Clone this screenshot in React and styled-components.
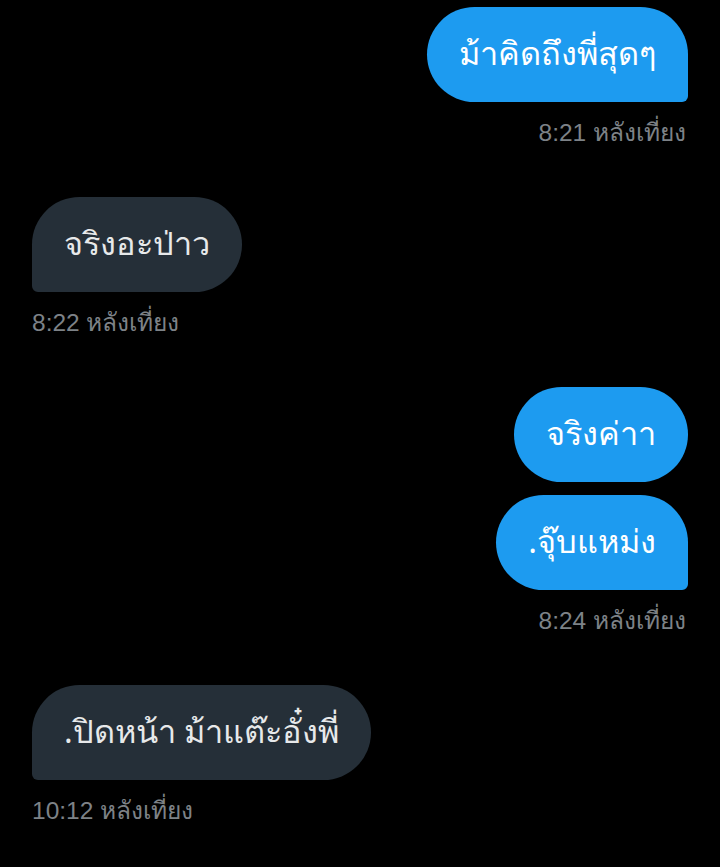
import React from "react";
import styled, { createGlobalStyle, css } from "styled-components";

const Global = createGlobalStyle`
  html, body { margin: 0; padding: 0; background: #000; }
  body { font-family: "Noto Sans", "DejaVu Sans", "Liberation Sans", sans-serif; }
`;

const Thread = styled.div`
  display: flex;
  flex-direction: column;
  gap: 49px;
  padding: 7px 32px 40px;
  min-height: 867px;
  box-sizing: border-box;
  background: #000;
`;

const Group = styled.div`
  display: flex;
  flex-direction: column;
  align-items: ${(p) => (p.$mine ? "flex-end" : "flex-start")};
`;

const Stack = styled.div`
  display: flex;
  flex-direction: column;
  align-items: inherit;
  gap: 13px;
`;

const Bubble = styled.div`
  box-sizing: border-box;
  height: 95px;
  display: flex;
  align-items: center;
  padding: 0 32px 2px;
  border-radius: 48px;
  font-size: 32.5px;
  white-space: nowrap;
  ${(p) =>
    p.$mine
      ? css`
          background: #1d9bf0;
          color: #ffffff;
          ${p.$tail && "border-bottom-right-radius: 6px;"}
        `
      : css`
          background: #252f38;
          color: #e7e9ea;
          ${p.$tail && "border-bottom-left-radius: 6px;"}
        `}
`;

const Meta = styled.div`
  margin-top: 16px;
  font-family: "Liberation Sans", "Noto Sans", sans-serif;
  font-size: 24.5px;
  line-height: 30px;
  color: #7d8287;
  padding: 0 2px 0 0;
`;

const groups = [
  { mine: true, msgs: ["ม้าคิดถึงพี่สุดๆ"], time: "8:21 หลังเที่ยง" },
  { mine: false, msgs: ["จริงอะป่าว"], time: "8:22 หลังเที่ยง" },
  { mine: true, msgs: ["จริงค่าา", ".จุ๊บแหม่ง"], time: "8:24 หลังเที่ยง" },
  { mine: false, msgs: [".ปิดหน้า ม้าแต๊ะอั๋งพี่"], time: "10:12 หลังเที่ยง" },
];

export default function App() {
  return (
    <>
      <Global />
      <Thread>
        {groups.map((g, i) => (
          <Group key={i} $mine={g.mine}>
            <Stack>
              {g.msgs.map((m, j) => (
                <Bubble key={j} $mine={g.mine} $tail={j === g.msgs.length - 1}>
                  {m}
                </Bubble>
              ))}
            </Stack>
            <Meta>{g.time}</Meta>
          </Group>
        ))}
      </Thread>
    </>
  );
}
